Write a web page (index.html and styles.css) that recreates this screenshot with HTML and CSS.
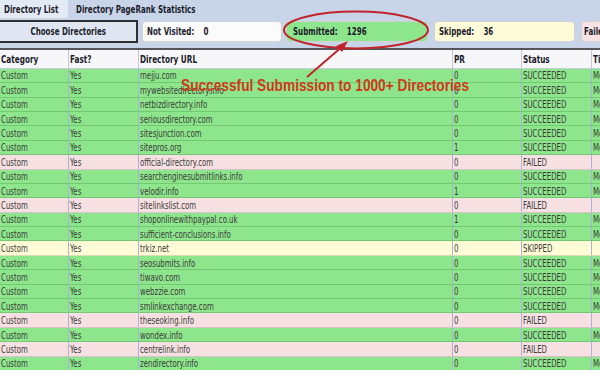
FILE: index.html
```html
<!DOCTYPE html>
<html>
<head>
<meta charset="utf-8">
<link rel="stylesheet" href="styles.css">
</head>
<body>
<div class="app">
  <div class="tabs">
    <div class="tab active"><span class="t">Directory List</span></div>
    <div class="tab"><span class="t">Directory PageRank Statistics</span></div>
  </div>
  <div class="toolbar">
    <div class="choose"><span class="t">Choose Directories</span></div>
    <div class="stat nv"><span class="t">Not Visited:<span class="val">0</span></span></div>
    <div class="stat sub"><span class="t">Submitted:<span class="val">1296</span></span></div>
    <div class="stat skip"><span class="t">Skipped:<span class="val">36</span></span></div>
    <div class="stat fail"><span class="t">Failed:<span class="val">21</span></span></div>
  </div>
  <div class="grid">
    <div class="row head"><div class="cell"><span>Category</span></div><div class="cell"><span>Fast?</span></div><div class="cell"><span>Directory URL</span></div><div class="cell"><span>PR</span></div><div class="cell"><span>Status</span></div><div class="cell"><span>Time</span></div></div>
    <div class="row ok"><div class="cell"><span>Custom</span></div><div class="cell"><span>Yes</span></div><div class="cell"><span>mejju.com</span></div><div class="cell"><span>0</span></div><div class="cell"><span>SUCCEEDED</span></div><div class="cell"><span>Mon</span></div></div>
    <div class="row ok"><div class="cell"><span>Custom</span></div><div class="cell"><span>Yes</span></div><div class="cell"><span>mywebsitedirectory.info</span></div><div class="cell"><span>0</span></div><div class="cell"><span>SUCCEEDED</span></div><div class="cell"><span>Mon</span></div></div>
    <div class="row ok"><div class="cell"><span>Custom</span></div><div class="cell"><span>Yes</span></div><div class="cell"><span>netbizdirectory.info</span></div><div class="cell"><span>0</span></div><div class="cell"><span>SUCCEEDED</span></div><div class="cell"><span>Mon</span></div></div>
    <div class="row ok"><div class="cell"><span>Custom</span></div><div class="cell"><span>Yes</span></div><div class="cell"><span>seriousdirectory.com</span></div><div class="cell"><span>0</span></div><div class="cell"><span>SUCCEEDED</span></div><div class="cell"><span>Mon</span></div></div>
    <div class="row ok"><div class="cell"><span>Custom</span></div><div class="cell"><span>Yes</span></div><div class="cell"><span>sitesjunction.com</span></div><div class="cell"><span>0</span></div><div class="cell"><span>SUCCEEDED</span></div><div class="cell"><span>Mon</span></div></div>
    <div class="row ok"><div class="cell"><span>Custom</span></div><div class="cell"><span>Yes</span></div><div class="cell"><span>sitepros.org</span></div><div class="cell"><span>1</span></div><div class="cell"><span>SUCCEEDED</span></div><div class="cell"><span>Mon</span></div></div>
    <div class="row bad"><div class="cell"><span>Custom</span></div><div class="cell"><span>Yes</span></div><div class="cell"><span>official-directory.com</span></div><div class="cell"><span>0</span></div><div class="cell"><span>FAILED</span></div><div class="cell"></div></div>
    <div class="row ok"><div class="cell"><span>Custom</span></div><div class="cell"><span>Yes</span></div><div class="cell"><span>searchenginesubmitlinks.info</span></div><div class="cell"><span>0</span></div><div class="cell"><span>SUCCEEDED</span></div><div class="cell"><span>Mon</span></div></div>
    <div class="row ok"><div class="cell"><span>Custom</span></div><div class="cell"><span>Yes</span></div><div class="cell"><span>velodir.info</span></div><div class="cell"><span>1</span></div><div class="cell"><span>SUCCEEDED</span></div><div class="cell"><span>Mon</span></div></div>
    <div class="row bad"><div class="cell"><span>Custom</span></div><div class="cell"><span>Yes</span></div><div class="cell"><span>sitelinkslist.com</span></div><div class="cell"><span>0</span></div><div class="cell"><span>FAILED</span></div><div class="cell"></div></div>
    <div class="row ok"><div class="cell"><span>Custom</span></div><div class="cell"><span>Yes</span></div><div class="cell"><span>shoponlinewithpaypal.co.uk</span></div><div class="cell"><span>1</span></div><div class="cell"><span>SUCCEEDED</span></div><div class="cell"><span>Mon</span></div></div>
    <div class="row ok"><div class="cell"><span>Custom</span></div><div class="cell"><span>Yes</span></div><div class="cell"><span>sufficient-conclusions.info</span></div><div class="cell"><span>0</span></div><div class="cell"><span>SUCCEEDED</span></div><div class="cell"><span>Mon</span></div></div>
    <div class="row skp"><div class="cell"><span>Custom</span></div><div class="cell"><span>Yes</span></div><div class="cell"><span>trkiz.net</span></div><div class="cell"><span>0</span></div><div class="cell"><span>SKIPPED</span></div><div class="cell"></div></div>
    <div class="row ok"><div class="cell"><span>Custom</span></div><div class="cell"><span>Yes</span></div><div class="cell"><span>seosubmits.info</span></div><div class="cell"><span>0</span></div><div class="cell"><span>SUCCEEDED</span></div><div class="cell"><span>Mon</span></div></div>
    <div class="row ok"><div class="cell"><span>Custom</span></div><div class="cell"><span>Yes</span></div><div class="cell"><span>tiwavo.com</span></div><div class="cell"><span>0</span></div><div class="cell"><span>SUCCEEDED</span></div><div class="cell"><span>Mon</span></div></div>
    <div class="row ok"><div class="cell"><span>Custom</span></div><div class="cell"><span>Yes</span></div><div class="cell"><span>webzzie.com</span></div><div class="cell"><span>0</span></div><div class="cell"><span>SUCCEEDED</span></div><div class="cell"><span>Mon</span></div></div>
    <div class="row ok"><div class="cell"><span>Custom</span></div><div class="cell"><span>Yes</span></div><div class="cell"><span>smlinkexchange.com</span></div><div class="cell"><span>0</span></div><div class="cell"><span>SUCCEEDED</span></div><div class="cell"><span>Mon</span></div></div>
    <div class="row bad"><div class="cell"><span>Custom</span></div><div class="cell"><span>Yes</span></div><div class="cell"><span>theseoking.info</span></div><div class="cell"><span>0</span></div><div class="cell"><span>FAILED</span></div><div class="cell"></div></div>
    <div class="row ok"><div class="cell"><span>Custom</span></div><div class="cell"><span>Yes</span></div><div class="cell"><span>wondex.info</span></div><div class="cell"><span>0</span></div><div class="cell"><span>SUCCEEDED</span></div><div class="cell"><span>Mon</span></div></div>
    <div class="row bad"><div class="cell"><span>Custom</span></div><div class="cell"><span>Yes</span></div><div class="cell"><span>centrelink.info</span></div><div class="cell"><span>0</span></div><div class="cell"><span>FAILED</span></div><div class="cell"></div></div>
    <div class="row ok"><div class="cell"><span>Custom</span></div><div class="cell"><span>Yes</span></div><div class="cell"><span>zendirectory.info</span></div><div class="cell"><span>0</span></div><div class="cell"><span>SUCCEEDED</span></div><div class="cell"><span>Mon</span></div></div>
  </div>
  <svg class="annot" width="600" height="370" viewBox="0 0 600 370">
    <ellipse cx="356" cy="30" rx="72" ry="18.5" fill="none" stroke="#c0242a" stroke-width="2"/>
    <line x1="307" y1="77" x2="344" y2="45" stroke="#c0242a" stroke-width="2"/>
    <polygon points="348,41 336,46 342,52" fill="#c0242a"/>
  </svg>
  <div class="callout">Successful Submission to 1000+ Directories</div>
</div>
</body>
</html>
```
FILE: styles.css
```css
html, body {
  margin: 0;
  padding: 0;
}
body {
  width: 600px;
  height: 370px;
  overflow: hidden;
  background: #c8d4e8;
  font-family: "DejaVu Sans", Verdana, sans-serif;
  color: #3a3a3a;
}
.app {
  position: relative;
  width: 600px;
  height: 370px;
  overflow: hidden;
}
.t {
  display: inline-block;
  white-space: nowrap;
  transform: scaleX(0.71);
  transform-origin: 0 50%;
}
.tabs {
  display: flex;
  height: 18px;
}
.tab {
  display: flex;
  align-items: center;
  padding: 1px 0 0 8px;
  box-sizing: border-box;
  font-size: 10px;
  font-weight: bold;
  color: #1c1c2c;
}
.tab.active {
  width: 68px;
  padding-left: 4px;
  background: #e4eaf4;
}
.toolbar {
  display: flex;
  align-items: center;
  height: 23px;
  padding: 2px 0 5px 0;
}
.choose {
  flex: 0 0 auto;
  width: 140px;
  height: 23px;
  box-sizing: border-box;
  margin-left: -2px;
  border: 2px solid #2e2e34;
  background: #dfe6f1;
  display: flex;
  align-items: center;
  justify-content: center;
  font-size: 10px;
  font-weight: bold;
  color: #1c1c2c;
}
.choose .t {
  transform-origin: 50% 50%;
}
.stat {
  flex: 0 0 141px;
  height: 21px;
  box-sizing: border-box;
  border: 1px solid #d2d2d6;
  border-radius: 4px;
  display: flex;
  align-items: center;
  padding-left: 4px;
  font-size: 10px;
  font-weight: bold;
  color: #1c1c2c;
}
.stat .val {
  margin-left: 13px;
}
.stat.nv { background: #fbfbfc; flex-basis: 140px; margin-left: 4px; }
.stat.sub { background: #8ee68c; flex-basis: 142px; margin-left: 4px; padding-left: 6px; }
.stat.skip { background: #fefcd8; margin-left: 6px; }
.stat.fail { background: #f8e2e4; margin-left: 6px; padding-left: 2px; }
.grid {
  border-top: 2px solid #55565c;
}
.row {
  display: grid;
  grid-template-columns: 69px 70px 314px 69px 70px 120px;
  height: 14.4px;
  box-sizing: border-box;
  font-size: 10px;
}
.cell {
  display: flex;
  align-items: center;
  border-right: 1px solid #a9b2d8;
  padding: 1px 0 0 1px;
  overflow: hidden;
}
.cell span {
  display: inline-block;
  white-space: nowrap;
  transform: scaleX(0.7);
  transform-origin: 0 50%;
}
.row.head {
  height: 18.8px;
  background: #f7f7f9;
  font-weight: bold;
  color: #1c1c2c;
  border-bottom: 1px solid #c8ccd8;
}
.row.head .cell {
  border-right-color: #c4c8d4;
}
.row.head .cell span {
  transform: scaleX(0.73);
}
.row.ok {
  background: #8ee68c;
  border-bottom: 1px solid #74c874;
}
.row.bad {
  background: #f7e0e2;
  border-bottom: 1px solid #d8c4c8;
}
.row.skp {
  background: #fefcd6;
  border-bottom: 1px solid #dcdcb4;
}
.annot {
  position: absolute;
  left: 0;
  top: 0;
  pointer-events: none;
}
.callout {
  position: absolute;
  left: 181px;
  top: 76px;
  font-family: "Liberation Sans", Arial, sans-serif;
  font-weight: bold;
  font-size: 16.5px;
  color: #d0381a;
  white-space: nowrap;
  transform: scaleX(0.83);
  transform-origin: 0 50%;
}
```
